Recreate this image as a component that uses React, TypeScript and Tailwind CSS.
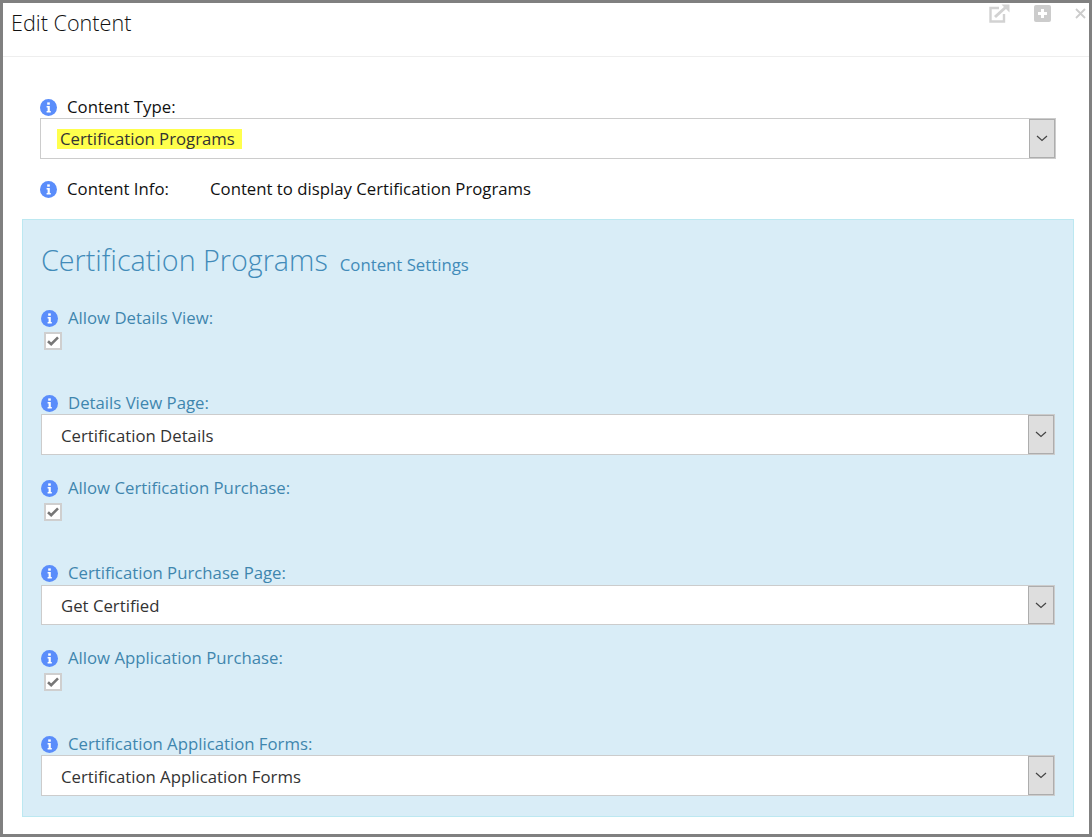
import React from 'react';

const InfoIcon = ({ className }: { className?: string }) => (
  <svg viewBox="0 0 17 17" className={`w-[17px] h-[17px] shrink-0 ${className ?? ''}`}>
    <circle cx="8.5" cy="8.5" r="8.5" fill="#5a8dfb" />
    <rect x="7.2" y="3.4" width="2.6" height="2.3" fill="#fff" />
    <path d="M6.6 7h3.2v5h1v1.5H6.6V12h1V8.4h-1z" fill="#fff" />
  </svg>
);

const Chevron = () => (
  <svg viewBox="0 0 12 7" className="w-[12px] h-[7px]">
    <path d="M1 1l5 4.5L11 1" fill="none" stroke="#444" strokeWidth="1.2" />
  </svg>
);

const SelectBox = ({ value, className }: { value: string; className?: string }) => (
  <div className={`flex items-stretch bg-white border border-[#cccccc] text-[#333] ${className ?? ''}`}>
    <div className="flex-1 flex items-center pl-[19px] pt-[2px]">{value}</div>
    <div className="w-[26px] bg-[#dedede] border border-[#adadad] flex items-center justify-center">
      <Chevron />
    </div>
  </div>
);

const CheckBox = ({ className }: { className?: string }) => (
  <div className={`ml-[3px] w-[18px] h-[18px] bg-white border-2 border-[#cfcfcf] flex items-center justify-center ${className ?? ''}`}>
    <svg viewBox="0 0 12 10" className="w-[12px] h-[10px]">
      <path d="M1 5.2l3.2 3L11 1.4" fill="none" stroke="#777777" strokeWidth="2.6" />
    </svg>
  </div>
);

const FieldLabel = ({ text, className }: { text: string; className?: string }) => (
  <div className={`flex items-center h-[20px] text-[#3f86ae] ${className ?? ''}`}>
    <InfoIcon />
    <span className="ml-[10px]">{text}</span>
  </div>
);

export default function App() {
  return (
    <div
      className="relative w-[1092px] h-[837px] bg-white border-[3px] border-[#808080] text-[16.75px] overflow-hidden"
      style={{ fontFamily: '"Open Sans", sans-serif' }}
    >
      {/* Header */}
      <div className="h-[54px] border-b border-[#eeeeee] pl-[8px] pt-[5px]">
        <h1 className="text-[21.6px] leading-[30px] font-light text-[#111]">Edit Content</h1>
      </div>
      <div className="absolute right-0 top-0">
        <svg viewBox="0 0 22 20" className="absolute right-[79px] top-[1px] w-[22px] h-[20px]">
          <path d="M11 4H2.5v13.5H16V10" fill="none" stroke="#d2d2d2" strokeWidth="2.4" />
          <path d="M7 13L18 3" fill="none" stroke="#d2d2d2" strokeWidth="3" />
          <path d="M13.5 0.5H21.5V8.5z" fill="#d2d2d2" />
        </svg>
        <svg viewBox="0 0 17 17" className="absolute right-[38px] top-[2px] w-[17px] h-[17px]">
          <rect width="17" height="17" rx="2" fill="#cccccc" />
          <path d="M8.5 4v9M4 8.5h9" stroke="#fff" strokeWidth="3" />
        </svg>
        <svg viewBox="0 0 11 11" className="absolute right-[3px] top-[5px] w-[11px] h-[11px]">
          <path d="M1 1l9 9M10 1l-9 9" stroke="#cccccc" strokeWidth="1.8" />
        </svg>
      </div>

      {/* Content type */}
      <div className="absolute left-[37px] top-[94px] w-[1016px]">
        <div className="flex items-center h-[20px] text-[#111]">
          <InfoIcon />
          <span className="ml-[10px]">Content Type:</span>
        </div>
        <div className="mt-[1px] h-[41px] flex items-stretch bg-white border border-[#cccccc]">
          <div className="flex-1 flex items-center pl-[16px]">
            <span className="bg-[#ffff4d] pl-[3px] pr-[7px] h-[20px] leading-[20px] text-[#333]">Certification Programs</span>
          </div>
          <div className="w-[26px] bg-[#dedede] border border-[#adadad] flex items-center justify-center">
            <Chevron />
          </div>
        </div>
        <div className="mt-[20px] flex items-center h-[20px] text-[#111]">
          <InfoIcon />
          <span className="ml-[10px] w-[143px]">Content Info:</span>
          <span>Content to display Certification Programs</span>
        </div>
      </div>

      {/* Settings panel */}
      <div className="absolute left-[19px] top-[216px] w-[1052px] h-[598px] bg-[#d9edf7] border border-[#bce8f1] pl-[18px] pr-[18px]">
        <div className="flex items-baseline h-[40px] mt-[20px] text-[#428bb9]">
          <span className="text-[28.7px] leading-[40px] font-light">Certification Programs</span>
          <span className="ml-[12px] text-[16.75px]">Content Settings</span>
        </div>
        <FieldLabel text="Allow Details View:" className="mt-[28px]" />
        <CheckBox className="mt-[4px]" />
        <FieldLabel text="Details View Page:" className="mt-[43px]" />
        <SelectBox value="Certification Details" className="mt-[1px] h-[41px]" />
        <FieldLabel text="Allow Certification Purchase:" className="mt-[23px]" />
        <CheckBox className="mt-[5px]" />
        <FieldLabel text="Certification Purchase Page:" className="mt-[42px]" />
        <SelectBox value="Get Certified" className="mt-[2px] h-[40px]" />
        <FieldLabel text="Allow Application Purchase:" className="mt-[23px]" />
        <CheckBox className="mt-[5px]" />
        <FieldLabel text="Certification Application Forms:" className="mt-[43px]" />
        <SelectBox value="Certification Application Forms" className="mt-[1px] h-[41px]" />
      </div>
    </div>
  );
}
